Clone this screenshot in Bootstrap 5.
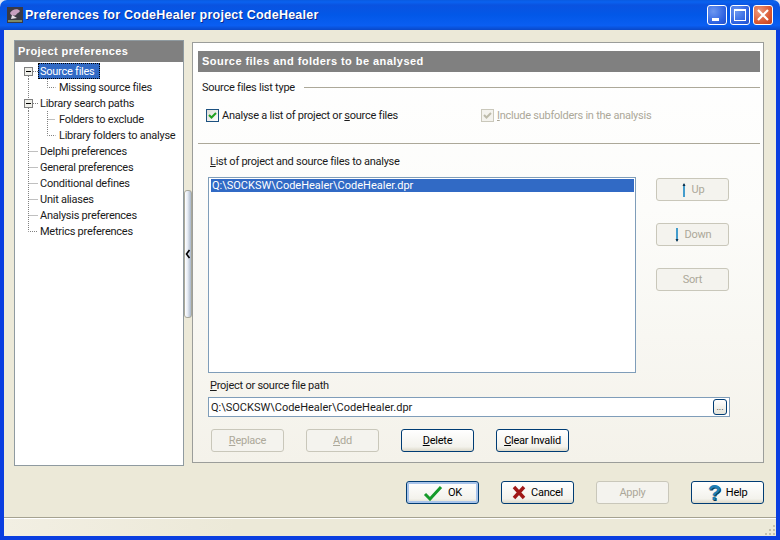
<!DOCTYPE html>
<html lang="en">
<head>
<meta charset="utf-8">
<title>Preferences</title>
<link href="https://cdn.jsdelivr.net/npm/bootstrap@5.3.0/dist/css/bootstrap.min.css" rel="stylesheet">
<style>
html,body{height:540px;overflow:hidden;background:#dfe6f5;}
body{font:11px/14px Roboto,"Liberation Sans",sans-serif;letter-spacing:-.25px;color:#1a1a1a;}
.xpwin{width:780px;height:540px;}
.xptitle{height:30px;border-radius:7px 7px 0 0;padding:0 7px 0 7px;background:linear-gradient(#0a5be0 0,#0a62f0 2px,#0a53e0 5px,#0258e8 50%,#0a5ef2 85%,#0a48c8 100%);}
.xptitletext{font:bold 12.5px/16px "Liberation Sans",sans-serif;letter-spacing:.24px;color:#fff;margin-left:2px;text-shadow:1px 1px 0 #0a2a90;}
.capgroup{gap:3px;}
.capbtn{width:20px;height:20px;border:1px solid #fff;border-radius:3px;background:radial-gradient(circle at 30% 30%,#6d97f0,#2a5fe0 70%,#2450c8);}
.capclose{background:radial-gradient(circle at 30% 30%,#ec9a7e,#d9552f 65%,#c0401f);}
.xpclient{background:#ece9d8;border-left:4px solid #0a3ee0;border-right:4px solid #0a3ee0;border-bottom:4px solid #0a3ee0;}
.xpmain{padding-left:10px;}
.treepane{width:170px;height:426px;margin-top:10px;background:#fff;border:1px solid #8f9aa0;}
.panehead{background:#808080;color:#fff;font-family:"Liberation Sans",sans-serif;font-weight:700;letter-spacing:.4px;}
.treehead{height:21px;line-height:21px;padding-left:3px;margin-bottom:1px;}
.treerow{height:16px;line-height:18px;white-space:nowrap;}
.treerow svg{flex:none;}
.treetxt{padding:0 2px;height:16px;}
.treesel{background:#316ac5;color:#fff;outline:1px dotted #000;outline-offset:-1px;padding-right:5px;}
.splitter{width:8px;margin-top:10px;height:426px;}
.splitgrip{width:8px;height:128px;margin-top:150px;border:1px solid #a8a89a;border-radius:3px;background:linear-gradient(90deg,#fff 0,#e8edf5 40%,#a9b7c9 100%);}
.formpane{width:572px;height:421px;margin-top:12px;border:1px solid #9b9d9a;background:linear-gradient(#fff,#fcfcfa 40%,#f4f2ea);}
.formhead{height:21px;line-height:21px;margin:8px 3px 0 5px;padding-left:4px;letter-spacing:.45px;}
.grouprow{margin:7px 3px 0 9px;height:16px;line-height:16px;}
.grouptext{padding-top:2px;}
.groupline{height:1px;background:#aca899;margin-left:9px;}
.checkrow{margin:12px 0 0 13px;height:16px;line-height:16px;}
.checktext{padding-top:2px;}
.checkcol1{width:275px;}
.xpcheck{width:13px;height:13px;flex:none;border:1px solid #1c5180;background:linear-gradient(135deg,#dcdcd7,#fff);margin-right:3px;}
.xpcheckoff{border-color:#cac8bb;background:#f4f3ee;}
.textoff{color:#aca899;}
.sepline{height:1px;background:#aca899;margin:20px 3px 0 5px;}
.fieldlabel{height:13px;margin:11px 0 0 17px;}
.listrow{margin:9px 0 0 15px;}
.listbox{width:428px;height:196px;border:1px solid #7f9db9;background:#fff;padding:1px 1px 0 2px;}
.listsel{background:#316ac5;color:#fff;height:13px;line-height:13px;padding-left:1px;letter-spacing:0;}
.sidebtns{margin-left:20px;margin-top:1px;gap:22px;}
.xpbtn{width:73px;height:23px;padding:0;font:inherit;letter-spacing:inherit;border:1px solid #003c74;border-radius:3px;color:#000;background:linear-gradient(#fff,#f3f2ec 80%,#dcd8c8);}
.xpbtn:disabled{opacity:1;border-color:#c9c7ba;color:#aca899;background:#f4f3ee;}
.xpbtn:hover{border-color:#003c74;color:#000;background:linear-gradient(#fff,#f3f2ec 80%,#dcd8c8);}
.xpdefault{box-shadow:inset 0 0 0 2px #a9c4ea;}
.pathlabel{height:13px;margin:6px 0 0 17px;}
.pathbox{width:522px;height:20px;margin:5px 0 0 15px;border:1px solid #7f9db9;background:#fff;padding-left:2px;padding-right:2px;}
.pathtext{padding-top:2px;letter-spacing:0;}
.ellbtn{width:14px;height:16px;border:1px solid #003c74;border-radius:3px;background:linear-gradient(#fff,#e5e4da);font-size:9px;line-height:10px;padding:0;}
.actionrow{margin:12px 0 0 18px;gap:22px;}
.footrow{margin-top:15px;padding-right:12px;gap:22px;}
.helpmark{color:#1f7fb5;font:bold 22px/20px "Liberation Sans",sans-serif;text-shadow:1px 1px 0 #0b3d5c;}
.statusbar{height:19px;border-top:1px solid #a5a290;box-shadow:inset 0 1px 0 #fff;background:linear-gradient(90deg,#f2efe3,#ece9d8 30%);}
.btnlabel{margin-left:5px;}
</style>
</head>
<body>
<div class="xpwin d-flex flex-column">
  <div class="xptitle d-flex align-items-center">
    <svg width="16" height="16" viewBox="0 0 16 16"><rect width="16" height="16" fill="#3a3a44"/><rect x="1" y="13" width="14" height="2" fill="#7d8a6a"/><path d="M3 6c2-4 8-5 10-2-1 2-3 2-4 4-2 1-5 1-6-2z" fill="#c8a0c0"/><path d="M5 8l5 3-6 1z" fill="#e8e0e8"/></svg>
    <span class="xptitletext">Preferences for CodeHealer project CodeHealer</span>
    <div class="d-flex ms-auto capgroup">
      <div class="capbtn d-flex align-items-end"><svg width="18" height="18" viewBox="0 0 18 18"><rect x="4" y="12" width="7" height="3" fill="#fff"/></svg></div>
      <div class="capbtn"><svg width="18" height="18" viewBox="0 0 18 18"><rect x="3.5" y="3.5" width="11" height="11" fill="none" stroke="#fff"/><rect x="3" y="3" width="12" height="2" fill="#fff"/></svg></div>
      <div class="capbtn capclose"><svg width="18" height="18" viewBox="0 0 18 18"><path d="M4 4l10 10M14 4L4 14" stroke="#fff" stroke-width="2.2"/></svg></div>
    </div>
  </div>
  <div class="xpclient flex-grow-1 d-flex flex-column">
    <div class="xpmain d-flex align-items-start">
      <div class="treepane">
        <div class="panehead treehead">Project preferences</div>
        <div class="treerow d-flex"><svg width="23" height="16"><path d="M18 8.5h5M13.5 13v3" stroke="#808080" stroke-dasharray="1 1"/><rect x="9.5" y="4.5" width="8" height="8" fill="#f0f0ea" stroke="#808080"/><path d="M11 8.5h5" stroke="#000"/></svg><span class="treetxt treesel">Source files</span></div>
        <div class="treerow d-flex"><svg width="42" height="16"><path d="M13.5 0v16M32.5 0v8.5h8" stroke="#808080" stroke-dasharray="1 1" fill="none"/></svg><span class="treetxt">Missing source files</span></div>
        <div class="treerow d-flex"><svg width="23" height="16"><path d="M13.5 0v4M18 8.5h5M13.5 13v3" stroke="#808080" stroke-dasharray="1 1"/><rect x="9.5" y="4.5" width="8" height="8" fill="#f0f0ea" stroke="#808080"/><path d="M11 8.5h5" stroke="#000"/></svg><span class="treetxt">Library search paths</span></div>
        <div class="treerow d-flex"><svg width="42" height="16"><path d="M13.5 0v16M32.5 0v16M32.5 8.5h8" stroke="#808080" stroke-dasharray="1 1" fill="none"/></svg><span class="treetxt">Folders to exclude</span></div>
        <div class="treerow d-flex"><svg width="42" height="16"><path d="M13.5 0v16M32.5 0v8.5h8" stroke="#808080" stroke-dasharray="1 1" fill="none"/></svg><span class="treetxt">Library folders to analyse</span></div>
        <div class="treerow d-flex"><svg width="23" height="16"><path d="M13.5 0v16M13.5 8.5h9" stroke="#808080" stroke-dasharray="1 1"/></svg><span class="treetxt">Delphi preferences</span></div>
        <div class="treerow d-flex"><svg width="23" height="16"><path d="M13.5 0v16M13.5 8.5h9" stroke="#808080" stroke-dasharray="1 1"/></svg><span class="treetxt">General preferences</span></div>
        <div class="treerow d-flex"><svg width="23" height="16"><path d="M13.5 0v16M13.5 8.5h9" stroke="#808080" stroke-dasharray="1 1"/></svg><span class="treetxt">Conditional defines</span></div>
        <div class="treerow d-flex"><svg width="23" height="16"><path d="M13.5 0v16M13.5 8.5h9" stroke="#808080" stroke-dasharray="1 1"/></svg><span class="treetxt">Unit aliases</span></div>
        <div class="treerow d-flex"><svg width="23" height="16"><path d="M13.5 0v16M13.5 8.5h9" stroke="#808080" stroke-dasharray="1 1"/></svg><span class="treetxt">Analysis preferences</span></div>
        <div class="treerow d-flex"><svg width="23" height="16"><path d="M13.5 0v8.5h9" stroke="#808080" stroke-dasharray="1 1" fill="none"/></svg><span class="treetxt">Metrics preferences</span></div>
      </div>
      <div class="splitter">
        <div class="splitgrip d-flex align-items-center"><svg width="6" height="10" viewBox="0 0 6 10"><path d="M4.5 1L1.5 5l3 4" fill="none" stroke="#000" stroke-width="1.6"/></svg></div>
      </div>
      <div class="formpane">
        <div class="panehead formhead">Source files and folders to be analysed</div>
        <div class="grouprow d-flex align-items-center"><span class="grouptext">Source files list type</span><div class="groupline flex-grow-1"></div></div>
        <div class="checkrow d-flex align-items-center">
          <div class="d-flex align-items-center checkcol1">
            <span class="xpcheck d-flex"><svg width="11" height="11" viewBox="0 0 11 11"><path d="M2 5l2.5 2.5L9 3" fill="none" stroke="#21a121" stroke-width="2"/></svg></span>
            <span class="checktext">Analyse a list of project or <u>s</u>ource files</span>
          </div>
          <div class="d-flex align-items-center textoff">
            <span class="xpcheck xpcheckoff d-flex"><svg width="11" height="11" viewBox="0 0 11 11"><path d="M2 5l2.5 2.5L9 3" fill="none" stroke="#bdbbaa" stroke-width="2"/></svg></span>
            <span class="checktext"><u>I</u>nclude subfolders in the analysis</span>
          </div>
        </div>
        <div class="sepline"></div>
        <div class="fieldlabel"><u>L</u>ist of project and source files to analyse</div>
        <div class="listrow d-flex align-items-start">
          <div class="listbox"><div class="listsel">Q:\SOCKSW\CodeHealer\CodeHealer.dpr</div></div>
          <div class="sidebtns d-flex flex-column">
            <button class="btn xpbtn d-flex align-items-center justify-content-center" disabled><svg width="6" height="16" viewBox="0 0 6 16"><path d="M3 2v13" stroke="#0a7fc0" stroke-width="1.5"/><path d="M1.5 4L3 1l1.5 3z" fill="#12304a"/></svg><span class="btnlabel">Up</span></button>
            <button class="btn xpbtn d-flex align-items-center justify-content-center" disabled><svg width="6" height="16" viewBox="0 0 6 16"><path d="M3 1v13" stroke="#0a7fc0" stroke-width="1.5"/><path d="M1.5 12L3 15l1.5-3z" fill="#12304a"/></svg><span class="btnlabel">Down</span></button>
            <button class="btn xpbtn" disabled>Sort</button>
          </div>
        </div>
        <div class="pathlabel"><u>P</u>roject or source file path</div>
        <div class="pathbox d-flex align-items-center justify-content-between"><span class="pathtext">Q:\SOCKSW\CodeHealer\CodeHealer.dpr</span><button class="btn ellbtn">...</button></div>
        <div class="actionrow d-flex">
          <button class="btn xpbtn" disabled><u>R</u>eplace</button>
          <button class="btn xpbtn" disabled><u>A</u>dd</button>
          <button class="btn xpbtn"><u>D</u>elete</button>
          <button class="btn xpbtn"><u>C</u>lear Invalid</button>
        </div>
      </div>
    </div>
    <div class="footrow d-flex justify-content-end">
      <button class="btn xpbtn xpdefault d-flex align-items-center justify-content-center"><svg width="20" height="16" viewBox="0 0 20 16"><path d="M2 9l5 5L18 2" fill="none" stroke="#159a2a" stroke-width="3"/></svg><span class="btnlabel">OK</span></button>
      <button class="btn xpbtn d-flex align-items-center justify-content-center"><svg width="14" height="15" viewBox="0 0 14 15"><path d="M2 2l10 11M12 2L2 13" fill="none" stroke="#a01818" stroke-width="3.4"/></svg><span class="btnlabel">Cancel</span></button>
      <button class="btn xpbtn" disabled>Apply</button>
      <button class="btn xpbtn d-flex align-items-center justify-content-center"><span class="helpmark">?</span><span class="btnlabel">Help</span></button>
    </div>
    <div class="statusbar mt-auto d-flex justify-content-end align-items-end"><svg width="12" height="12" viewBox="0 0 12 12"><path d="M9 1h2v2H9zM5 5h2v2H5zM9 5h2v2H9zM1 9h2v2H1zM5 9h2v2H5zM9 9h2v2H9z" fill="#c4c1ae"/></svg></div>
  </div>
</div>
<script src="https://cdn.jsdelivr.net/npm/bootstrap@5.3.0/dist/js/bootstrap.bundle.min.js"></script>
</body>
</html>
